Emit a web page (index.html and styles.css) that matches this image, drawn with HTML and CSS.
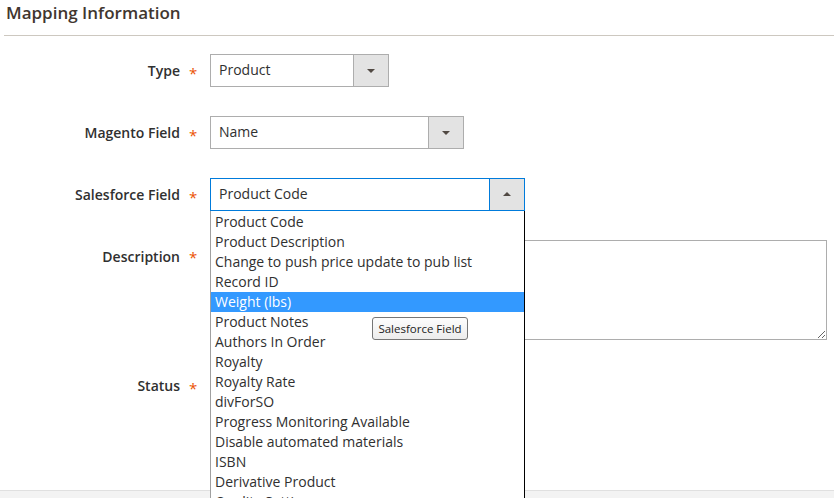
FILE: index.html
```html
<!DOCTYPE html>
<html>
<head>
<meta charset="utf-8">
<link rel="stylesheet" href="styles.css">
</head>
<body>
<div class="page">
  <div class="legend">Mapping Information</div>
  <div class="fields">
    <div class="field">
      <div class="label">Type</div>
      <div class="req">*</div>
      <div class="control">
        <div class="select w-type">
          <span class="value">Product</span>
          <span class="btn"><span class="arrow down"></span></span>
        </div>
      </div>
    </div>
    <div class="field">
      <div class="label">Magento Field</div>
      <div class="req">*</div>
      <div class="control">
        <div class="select w-mag">
          <span class="value">Name</span>
          <span class="btn"><span class="arrow down"></span></span>
        </div>
      </div>
    </div>
    <div class="field">
      <div class="label">Salesforce Field</div>
      <div class="req">*</div>
      <div class="control anchor">
        <div class="select w-sf focus">
          <span class="value">Product Code</span>
          <span class="btn"><span class="arrow up"></span></span>
        </div>
        <ul class="listbox">
          <li>Product Code</li>
          <li>Product Description</li>
          <li>Change to push price update to pub list</li>
          <li>Record ID</li>
          <li class="sel">Weight (lbs)</li>
          <li>Product Notes</li>
          <li>Authors In Order</li>
          <li>Royalty</li>
          <li>Royalty Rate</li>
          <li>divForSO</li>
          <li>Progress Monitoring Available</li>
          <li>Disable automated materials</li>
          <li>ISBN</li>
          <li>Derivative Product</li>
          <li>Quality Setting</li>
        </ul>
        <div class="tooltip">Salesforce Field</div>
      </div>
    </div>
    <div class="field top">
      <div class="label">Description</div>
      <div class="req">*</div>
      <div class="control">
        <textarea class="textarea"></textarea>
      </div>
    </div>
    <div class="field">
      <div class="label">Status</div>
      <div class="req">*</div>
      <div class="control">
        <div class="switch-slot"></div>
      </div>
    </div>
  </div>
  <div class="footer"></div>
</div>
</body>
</html>
```

FILE: styles.css
```css
* { box-sizing: border-box; }
html, body { margin: 0; padding: 0; background: #fff; }
body {
  font-family: "Open Sans", "Noto Sans", sans-serif;
  color: #303030;
  font-size: 14px;
}
.page {
  height: 498px;
  display: flex;
  flex-direction: column;
  overflow: hidden;
}
.legend {
  margin-left: 4px;
  height: 36px;
  padding: 1px 0 0 2px;
  font-size: 17px;
  line-height: 23px;
  font-weight: 600;
  color: #41362f;
  border-bottom: 1px solid #cdc8c0;
}
.fields {
  padding-top: 18px;
  display: flex;
  flex-direction: column;
  gap: 29px;
}
.field {
  display: grid;
  grid-template-columns: 180px 30px auto;
  align-items: center;
}
.field.top { align-items: start; }
.field.top .label, .field.top .req { padding-top: 7px; }
.label {
  text-align: right;
  font-weight: 600;
  font-size: 14px;
  line-height: 20px;
  color: #303030;
}
.req {
  color: #eb5202;
  font-size: 15px;
  line-height: 20px;
  padding-top: 4px;
  padding-left: 9px;
}
.control { position: relative; }
.select {
  display: flex;
  height: 33px;
  border: 1px solid #adadad;
  background: #fff;
}
.select .value {
  flex: 1;
  padding-left: 8px;
  line-height: 30px;
  font-size: 14px;
  color: #303030;
}
.select .btn {
  width: 35px;
  background: #e3e3e3;
  border-left: 1px solid #adadad;
  display: flex;
  align-items: center;
  justify-content: center;
}
.select.focus { border-color: #007bdb; }
.select.focus .btn { border-left-color: #007bdb; }
.arrow {
  width: 0; height: 0;
  border-left: 4px solid transparent;
  border-right: 4px solid transparent;
}
.arrow.down { border-top: 4px solid #514943; margin-top: 1px; }
.arrow.up { border-bottom: 4px solid #514943; margin-top: -1px; }
.w-type { width: 179px; }
.w-mag { width: 254px; }
.w-sf { width: 315px; }
.listbox {
  position: absolute;
  left: 0;
  top: 33px;
  width: 315px;
  height: 300px;
  margin: 0;
  padding: 1px 0 0 0;
  list-style: none;
  background: #fff;
  border-left: 1px solid #a0a0a0;
  border-right: 1px solid #000;
  overflow: hidden;
  z-index: 5;
}
.listbox li {
  height: 20px;
  line-height: 20px;
  padding-left: 4px;
  font-size: 14px;
  color: #303030;
  white-space: nowrap;
}
.listbox li.sel { background: #3399ff; color: #fff; }
.tooltip {
  position: absolute;
  left: 162px;
  top: 139px;
  height: 23px;
  width: 96px;
  padding: 0;
  text-align: center;
  line-height: 21px;
  font-size: 11.5px;
  color: #222;
  background: linear-gradient(#fdfdfd, #ececec);
  border: 1px solid #767676;
  border-radius: 3px;
  white-space: nowrap;
  z-index: 6;
}
.textarea {
  display: block;
  width: 617px;
  height: 100px;
  border: 1px solid #adadad;
  margin: 0;
  font-family: inherit;
  resize: both;
}
.switch-slot { height: 33px; width: 60px; }
.footer {
  margin-top: auto;
  height: 8px;
  background: #f3f3f3;
  border-top: 1px solid #e0e0e0;
}
```
